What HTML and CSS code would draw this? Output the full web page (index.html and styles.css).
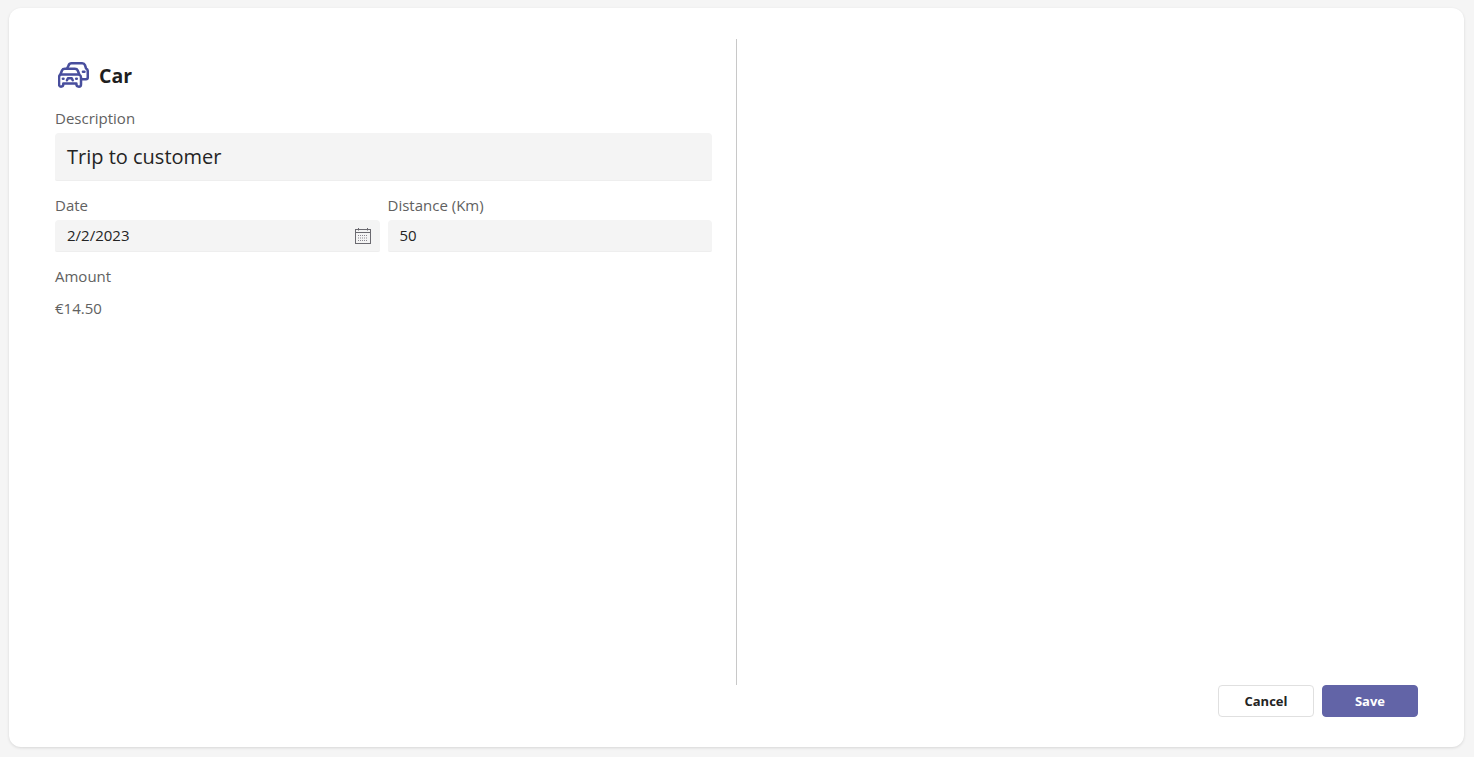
FILE: index.html
```html
<!DOCTYPE html>
<html lang="en">
  <head>
    <meta charset="UTF-8" />
    <title>Car</title>
    <link rel="stylesheet" href="styles.css">
  </head>
  <body>
    <div class="card">
      <div class="panes">
        <div class="form-pane">
          <div class="title-row">
            <svg class="car-icon" viewBox="0 0 32 27" fill="none" stroke="#484e9d" stroke-width="2.6" stroke-linecap="round" stroke-linejoin="round">
              <path d="M9.5 6.5 L11 3.4 Q11.6 1.4 14 1.4 H25 Q27.2 1.4 28 3.4 L29 6.5 Q30.8 7.4 30.8 9.4 V16.2 Q30.8 18 29 18 H24" />
              <path d="M25.8 10 H27.4" />
              <path d="M2.4 13 L4 8.8 Q4.8 7 7 7 H17.4 Q19.6 7 20.4 8.8 L22 13 Q23.8 14 23.8 16 V23 Q23.8 25.6 21.6 25.6 Q19 25.6 19 23.2 V22.4 H5.4 V23.2 Q5.4 25.6 3 25.6 Q1 25.6 1 23 V16 Q1 14 2.4 13 Z" />
              <path d="M2.6 13 H21.8" />
              <path d="M5 17.4 H5.6" />
              <path d="M18.8 17.4 H19.4" />
              <path d="M9.2 19 L10.2 17 H14.2 L15.2 19" />
            </svg>
            <h1 class="title">Car</h1>
          </div>
          <div class="field">
            <label class="field-label">Description</label>
            <div class="input input-large">Trip to customer</div>
          </div>
          <div class="field-row">
            <div class="field">
              <label class="field-label">Date</label>
              <div class="input input-date">
                <span>2/2/2023</span>
                <svg class="calendar-icon" viewBox="0 0 18 18" fill="none">
                  <rect x="1.5" y="2.5" width="15" height="14" stroke="#6b6a70" />
                  <path d="M1.5 5.5 H16.5" stroke="#6b6a70" />
                  <path d="M4.5 1 V3.5 M13.5 1 V3.5" stroke="#6b6a70" />
                  <path d="M4 8.5 H14 M4 11 H14 M4 13.5 H14" stroke="#8a8790" stroke-dasharray="1 1" />
                </svg>
              </div>
            </div>
            <div class="field">
              <label class="field-label">Distance (Km)</label>
              <div class="input">50</div>
            </div>
          </div>
          <div class="amount">
            <div class="field-label">Amount</div>
            <div class="amount-value">€14.50</div>
          </div>
        </div>
        <div class="side-pane"></div>
      </div>
      <div class="actions">
        <button class="btn">Cancel</button>
        <button class="btn btn-primary">Save</button>
      </div>
    </div>
  </body>
</html>
```

FILE: styles.css
```css
* {
  box-sizing: border-box;
}
html,
body {
  height: 100%;
}
body {
  margin: 0;
  padding: 8px 10px 10px 9px;
  background-color: #f5f5f5;
  font-family: "Open Sans", "Noto Sans", sans-serif;
  color: #242424;
  overflow: hidden;
}
.card {
  height: 100%;
  display: flex;
  flex-direction: column;
  padding: 31px 46px 30px 46px;
  background-color: #fff;
  border-radius: 12px;
  box-shadow: 0 1px 3px rgba(0, 0, 0, 0.12);
}
.panes {
  display: flex;
  height: 646px;
}
.form-pane {
  width: 682px;
  padding: 23px 24px 0 0;
  border-right: 1px solid #c8c8c8;
}
.title-row {
  display: flex;
  align-items: center;
  gap: 10px;
  height: 26px;
  padding-left: 3px;
}
.car-icon {
  width: 31px;
  height: 26px;
}
.title {
  margin: 0;
  font-size: 19.5px;
  font-weight: 700;
  color: #1f1f1f;
}
.field {
  flex: 1;
  min-width: 0;
}
.field-label {
  display: block;
  height: 33px;
  padding-top: 8px;
  font-size: 15px;
  line-height: 20px;
  color: #616161;
}
.title-row + .field {
  margin-top: 12px;
}
.input {
  display: flex;
  align-items: center;
  height: 32px;
  padding: 0 12px 2px;
  background-color: #f4f4f4;
  border-bottom: 1px solid #eeeeee;
  border-radius: 4px 4px 2px 2px;
  font-size: 15px;
}
.input-large {
  height: 48px;
  padding-bottom: 0;
  font-size: 20px;
}
.input-date {
  justify-content: space-between;
  padding-right: 8px;
  padding-bottom: 0;
}
.input-date span {
  margin-bottom: 2px;
}
.calendar-icon {
  width: 18px;
  height: 18px;
}
.field-row {
  display: flex;
  gap: 8px;
  margin-top: 8px;
}
.field-row .field-label {
  height: 31px;
  padding-top: 6px;
}
.amount {
  margin-top: 6px;
}
.amount-value {
  margin-top: 7px;
  font-size: 15px;
  line-height: 20px;
  color: #616161;
}
.actions {
  display: flex;
  justify-content: flex-end;
  gap: 8px;
}
.btn {
  width: 96px;
  height: 32px;
  background-color: #fff;
  border: 1px solid #e0e0e0;
  border-radius: 4px;
  font-family: inherit;
  font-size: 13px;
  font-weight: 700;
  color: #242424;
}
.btn-primary {
  background-color: #6264a7;
  border-color: #6264a7;
  color: #fff;
}
```
